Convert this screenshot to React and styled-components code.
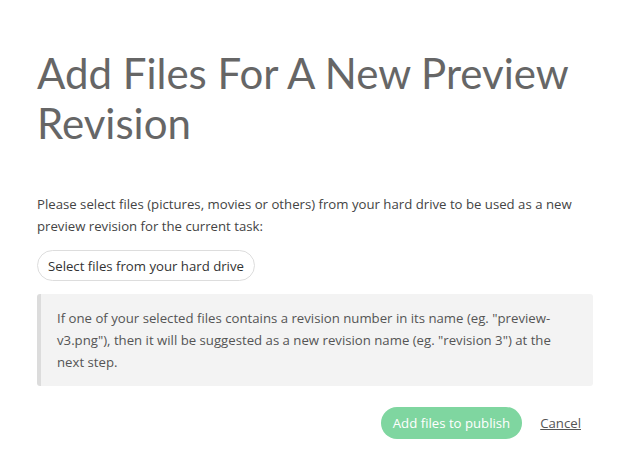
import React from "react";
import styled, { createGlobalStyle } from "styled-components";

const Global = createGlobalStyle`
  html, body { margin: 0; padding: 0; background: #fff; }
  body { font-family: "Open Sans", "Noto Sans", sans-serif; }
`;

const Page = styled.div`
  width: 633px;
  box-sizing: border-box;
  padding: 48px 40px 0 37px;
`;

const Title = styled.h1`
  margin: 0 -20px 0 0;
  font-family: Lato, sans-serif;
  font-weight: 400;
  font-size: 42px;
  line-height: 50px;
  color: #666;
`;

const Text = styled.p`
  margin: 45px 0 0;
  font-size: 13.2px;
  line-height: 22px;
  color: #444;
`;

const PillButton = styled.button`
  margin-top: 13px;
  height: 31px;
  padding: 0 10px;
  border: 1px solid #ddd;
  border-radius: 16px;
  background: #fff;
  font-family: "Open Sans", sans-serif;
  font-size: 13.2px;
  color: #333;
`;

const Info = styled.div`
  margin-top: 13px;
  background: #f3f3f3;
  border-left: 4px solid #dcdcdc;
  border-radius: 3px;
  padding: 13px 16px 13px 16px;
  font-size: 13.2px;
  line-height: 22px;
  color: #555;
`;

const Actions = styled.div`
  display: flex;
  justify-content: flex-end;
  align-items: center;
  gap: 18px;
  margin-top: 21px;
  padding-right: 12px;
`;

const Primary = styled.button`
  height: 32px;
  padding: 0 12px;
  border: none;
  border-radius: 16px;
  background: #7fd6a0;
  color: #fff;
  font-family: "Open Sans", sans-serif;
  font-size: 13.2px;
`;

const Cancel = styled.a`
  font-size: 13.2px;
  color: #555;
  text-decoration: underline;
`;

export default function App() {
  return (
    <Page>
      <Global />
      <Title>Add Files For A New Preview Revision</Title>
      <Text>
        Please select files (pictures, movies or others) from your hard drive to be used as a new
        preview revision for the current task:
      </Text>
      <PillButton>Select files from your hard drive</PillButton>
      <Info>
        If one of your selected files contains a revision number in its name (eg. "preview-
        v3.png"), then it will be suggested as a new revision name (eg. "revision 3") at the next
        step.
      </Info>
      <Actions>
        <Primary>Add files to publish</Primary>
        <Cancel>Cancel</Cancel>
      </Actions>
    </Page>
  );
}
